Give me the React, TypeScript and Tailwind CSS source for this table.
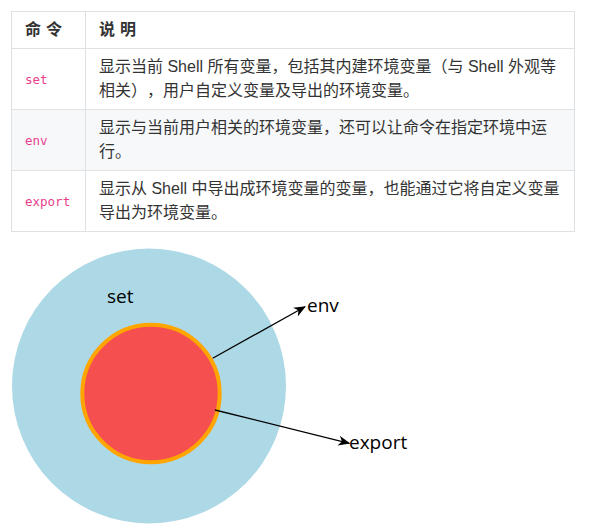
const rows = [
  {
    cmd: 'set',
    desc: '显示当前 Shell 所有变量，包括其内建环境变量（与 Shell 外观等相关），用户自定义变量及导出的环境变量。',
    striped: false,
  },
  {
    cmd: 'env',
    desc: '显示与当前用户相关的环境变量，还可以让命令在指定环境中运行。',
    striped: true,
  },
  {
    cmd: 'export',
    desc: '显示从 Shell 中导出成环境变量的变量，也能通过它将自定义变量导出为环境变量。',
    striped: false,
  },
];

const Diagram = () => (
  <svg width="589" height="291" viewBox="0 0 589 291" className="block">
    <defs>
      <marker id="arrow" viewBox="0 0 12 10" refX="11" refY="5" markerWidth="12" markerHeight="10" markerUnits="userSpaceOnUse" orient="auto">
        <path d="M0,0 L12,5 L0,10 L3.5,5 z" fill="#000" />
      </marker>
    </defs>
    <ellipse cx="149" cy="146" rx="137" ry="137.5" fill="#add8e6" />
    <circle cx="151" cy="153.5" r="68.7" fill="#f54f4f" stroke="#ffa500" strokeWidth="4" />
    <line x1="212.7" y1="118.3" x2="305" y2="66.7" stroke="#000" strokeWidth="1.3" markerEnd="url(#arrow)" />
    <line x1="215" y1="170" x2="349.3" y2="203.3" stroke="#000" strokeWidth="1.3" markerEnd="url(#arrow)" />
    <g fontFamily="'Open Sans', 'Noto Sans', sans-serif" fontSize="19" fill="#000">
      <text x="107" y="63">set</text>
      <text x="307" y="72">env</text>
      <text x="349" y="209">export</text>
    </g>
  </svg>
);

export default function App() {
  return (
    <div className="bg-white w-[589px] h-[531px] overflow-hidden pt-[11px] text-[#333] [text-spacing-trim:space-all] font-['Liberation_Sans','Noto_Sans_CJK_SC',sans-serif]">
      <table className="ml-[11px] w-[564px] border-collapse text-[16px] leading-[24px]">
        <thead>
          <tr>
            <th className="w-[74px] border border-[#dfe2e5] px-[13px] py-[6px] text-left font-bold tracking-[5px]">命令</th>
            <th className="border border-[#dfe2e5] px-[13px] py-[6px] text-left font-bold tracking-[5px]">说明</th>
          </tr>
        </thead>
        <tbody>
          {rows.map((row) => (
            <tr key={row.cmd} className={row.striped ? 'bg-[#f6f8fa]' : ''}>
              <td className="border border-[#dfe2e5] px-[13px] py-[6px]">
                <code className="text-[12.5px] text-[#e83e8c] font-['DejaVu_Sans_Mono',monospace]">{row.cmd}</code>
              </td>
              <td className="border border-[#dfe2e5] px-[13px] py-[6px]">{row.desc}</td>
            </tr>
          ))}
        </tbody>
      </table>
      <div className="mt-[8px]">
        <Diagram />
      </div>
    </div>
  );
}
